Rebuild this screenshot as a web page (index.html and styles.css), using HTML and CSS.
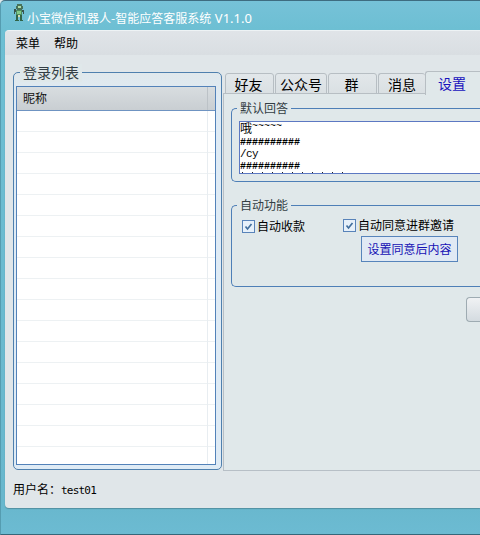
FILE: index.html
```html
<!DOCTYPE html>
<html lang="zh-CN">
<head>
<meta charset="utf-8">
<title>小宝微信机器人</title>
<link rel="stylesheet" href="styles.css">
</head>
<body>
<div class="window">
  <header class="titlebar">
    <svg class="logo" width="14" height="19" viewBox="0 0 14 19">
      <path d="M5 1h5v2h1v3h-1v1H5V6H4V3h1z" fill="#47725a"/>
      <path d="M6 3h3v2H6z" fill="#b0dda8"/>
      <path d="M4 7h6v5H4z" fill="#4b8b61"/>
      <path d="M5 8h4v3H5z" fill="#83c98b"/>
      <path d="M2 6h2v3H3v2H2zM10 7h2v4h-1v-2h-1z" fill="#39534e"/>
      <path d="M4 12h2v5h1v1H3v-1h1zM8 12h2v5h1v1H8z" fill="#316447"/>
      <path d="M6 12h2v2H6z" fill="#d5dcb0"/>
    </svg>
    <h1 class="title">小宝微信机器人-智能应答客服系统 <span class="version">V1.1.0</span></h1>
  </header>
  <div class="client">
    <nav class="menu"><span>菜单</span><span>帮助</span></nav>
    <main class="main">
      <section class="group logins">
        <h2 class="legend legend-large">登录列表</h2>
        <div class="table">
          <div class="thead">昵称</div>
          <div class="tbody"></div>
        </div>
      </section>
      <section class="tabs">
        <div class="tabbar">
          <div class="tab">好友</div>
          <div class="tab tab-wide">公众号</div>
          <div class="tab">群</div>
          <div class="tab tab-last">消息</div>
          <div class="tab active">设置</div>
        </div>
        <div class="panel">
          <section class="group answer">
            <h2 class="legend">默认回答</h2>
            <div class="textbox">
              <div class="line first">哦<span class="tilde">~~~~~</span></div>
              <div class="line hashes">##########</div>
              <div class="line command">/cy</div>
              <div class="line hashes">##########</div>
              <div class="line partial" aria-hidden="true"></div>
            </div>
          </section>
          <section class="group auto">
            <h2 class="legend">自动功能</h2>
            <div class="options">
              <label class="check collect"><svg class="box" width="13" height="13" viewBox="0 0 13 13"><rect x=".5" y=".5" width="12" height="12" fill="#e6f0fa" stroke="#5883b9"/><path d="M3.5 6.5l2 2.5 4-5" fill="none" stroke="#416e9d" stroke-width="1.7"/></svg>自动收款</label>
              <div class="invite">
                <label class="check"><svg class="box" width="13" height="13" viewBox="0 0 13 13"><rect x=".5" y=".5" width="12" height="12" fill="#e6f0fa" stroke="#5883b9"/><path d="M3.5 6.5l2 2.5 4-5" fill="none" stroke="#416e9d" stroke-width="1.7"/></svg>自动同意进群邀请</label>
                <div class="setting">设置同意后内容</div>
              </div>
            </div>
          </section>
          <div class="action"></div>
        </div>
      </section>
    </main>
    <footer class="status">用户名：<span class="user">test01</span></footer>
  </div>
</div>
</body>
</html>
```
FILE: styles.css
```css
* { box-sizing: border-box; }
body {
  margin: 0;
  width: 480px;
  height: 535px;
  overflow: hidden;
  background: #dfe9ec;
  font: 12px/16px "Liberation Sans", "Noto Sans CJK SC", sans-serif;
  color: #000;
  white-space: nowrap;
}
h1, h2 { margin: 0; font-weight: normal; }
.window {
  height: 535px;
  padding-left: 4px;
  border-top: 1px solid #3e6c80;
  border-bottom: 1px solid #36677a;
  border-left: 1px solid #559cb0;
  border-top-left-radius: 5px;
  background: linear-gradient(#76c2d8, #6dbfd3 28px, #68b7cd 500px, #6cbbd2);
}
.titlebar { display: flex; height: 29px; padding-left: 7px; }
.logo { margin-top: 2px; flex: none; }
.title {
  margin: 9px 0 0 1px;
  font: 12px/16px "Noto Sans CJK SC", sans-serif;
  color: #fff;
}
.version { font: 13px/16px "Noto Sans", sans-serif; margin-left: 1px; }
.client {
  height: 478px;
  border-radius: 4px 0 0 4px;
  background: #e0e6e9;
  border-top: 1px solid #eef3f5;
  box-shadow: 0 1px 1px #528fa0;
}
.menu {
  display: flex;
  gap: 14px;
  height: 24px;
  padding: 5px 0 0 11px;
  border-top-left-radius: 4px;
  background: linear-gradient(#e0e4e8, #d9dee2);
}
.main { display: flex; height: 422px; padding-left: 8px; }
.group { border: 1px solid #4e7fb7; border-radius: 5px; }
.legend {
  width: max-content;
  margin: -8px 0 0 5px;
  padding: 0 3px;
  background: #e0e8ea;
  color: #333e44;
  font-size: 12px;
  line-height: 16px;
}
.legend-large { font-size: 14px; line-height: 18px; margin: -9px 0 0 3px; }
.logins {
  width: 209px;
  height: 398px;
  margin-top: 17px;
  padding: 0 3px;
  border-color: #4f80ae;
  background: linear-gradient(#e0e8ec, #dfebf5 30px);
}
.table {
  width: 200px;
  height: 379px;
  margin-top: 4px;
  margin-left: -1px;
  border: 1px solid #5382b9;
  background: #fff;
}
.thead {
  height: 24px;
  padding: 4px 0 0 6px;
  border-bottom: 1px solid #6f94c2;
  background: linear-gradient(90deg, transparent 190px, #bcc2c7 190px, #bcc2c7 191px, transparent 191px), linear-gradient(#d8dde0, #c9ced2);
  color: #111;
}
.tbody {
  height: 353px;
  background:
    linear-gradient(90deg, transparent 190px, #e8edf1 190px, #e8edf1 191px, transparent 191px),
    repeating-linear-gradient(#fff 0, #fff 20px, #edf1f3 20px, #edf1f3 21px);
}
.tabs { width: 257px; margin: 16px 0 0 1px; flex: none; }
.tabbar { display: flex; align-items: flex-end; height: 23px; padding-left: 2px; }
.tab {
  flex: none;
  width: 49px;
  height: 21px;
  margin-right: 1px;
  padding-right: 2px;
  border: 1px solid #b7bec3;
  border-radius: 3px 3px 0 0;
  background: linear-gradient(#e2e7ea, #dae0e3);
  font-size: 14px;
  line-height: 22px;
  text-align: center;
}
.tab-wide { width: 52px; padding-right: 0; }
.tab-last { width: 47px; margin-right: 0; padding-right: 0; border-right: 0; }
.active {
  position: relative;
  width: 60px;
  height: 24px;
  margin-right: 0;
  margin-bottom: -1px;
  padding-right: 7px;
  border-bottom: 0;
  border-right: 0;
  background: #e0e8ea;
  color: #1712bd;
  line-height: 24px;
}
.panel {
  height: 378px;
  margin-top: -1px;
  padding: 14px 0 0 7px;
  border: 1px solid #b7bfc6;
  border-right: 0;
  background: #e0e8ea;
}
.answer, .auto { border-right: 0; border-radius: 5px 0 0 5px; }
.answer { height: 74px; }
.textbox {
  height: 53px;
  margin: 4px 0 0 7px;
  padding: 1px 0 0;
  border: 1px solid #5c78c2;
  border-right: 0;
  background: #fff;
  overflow: hidden;
  font-family: "Liberation Mono", "Noto Sans CJK SC", monospace;
}
.line { height: 12px; font-size: 10px; line-height: 13px; }
.hashes { font-weight: bold; }
.command { font-size: 11px; letter-spacing: -.6px; font-family: "Liberation Mono", monospace; }
.first { height: 13px; font-size: 12px; line-height: 15px; }
.tilde { font-size: 10px; position: relative; top: -4px; }
.partial {
  width: 110px;
  height: 1px;
  background: repeating-linear-gradient(90deg, transparent 0, transparent 2px, #222 2px, #222 3px, transparent 3px, transparent 10px);
}
.auto { height: 82px; margin-top: 23px; }
.options { display: flex; padding: 4px 0 0 10px; }
.check { display: flex; gap: 2px; line-height: 16px; }
.box { flex: none; margin-top: 1px; }
.collect { width: 101px; margin-top: 1px; }
.setting {
  width: 97px;
  height: 26px;
  margin: 2px 0 0 18px;
  border: 1px solid #5784bb;
  background: #e0e9f4;
  color: #1510b5;
  line-height: 26px;
  text-align: center;
}
.action {
  width: 20px;
  height: 25px;
  margin: 10px 0 0 235px;
  border: 1px solid #9eabb2;
  border-right: 0;
  border-radius: 4px 0 0 4px;
  background: linear-gradient(#f0f2f4, #d4dbe0);
}
.status { padding: 5px 0 0 8px; }
.user { font: 11px/16px "DejaVu Sans Mono", "Liberation Mono", monospace; letter-spacing: -.8px; }
```
